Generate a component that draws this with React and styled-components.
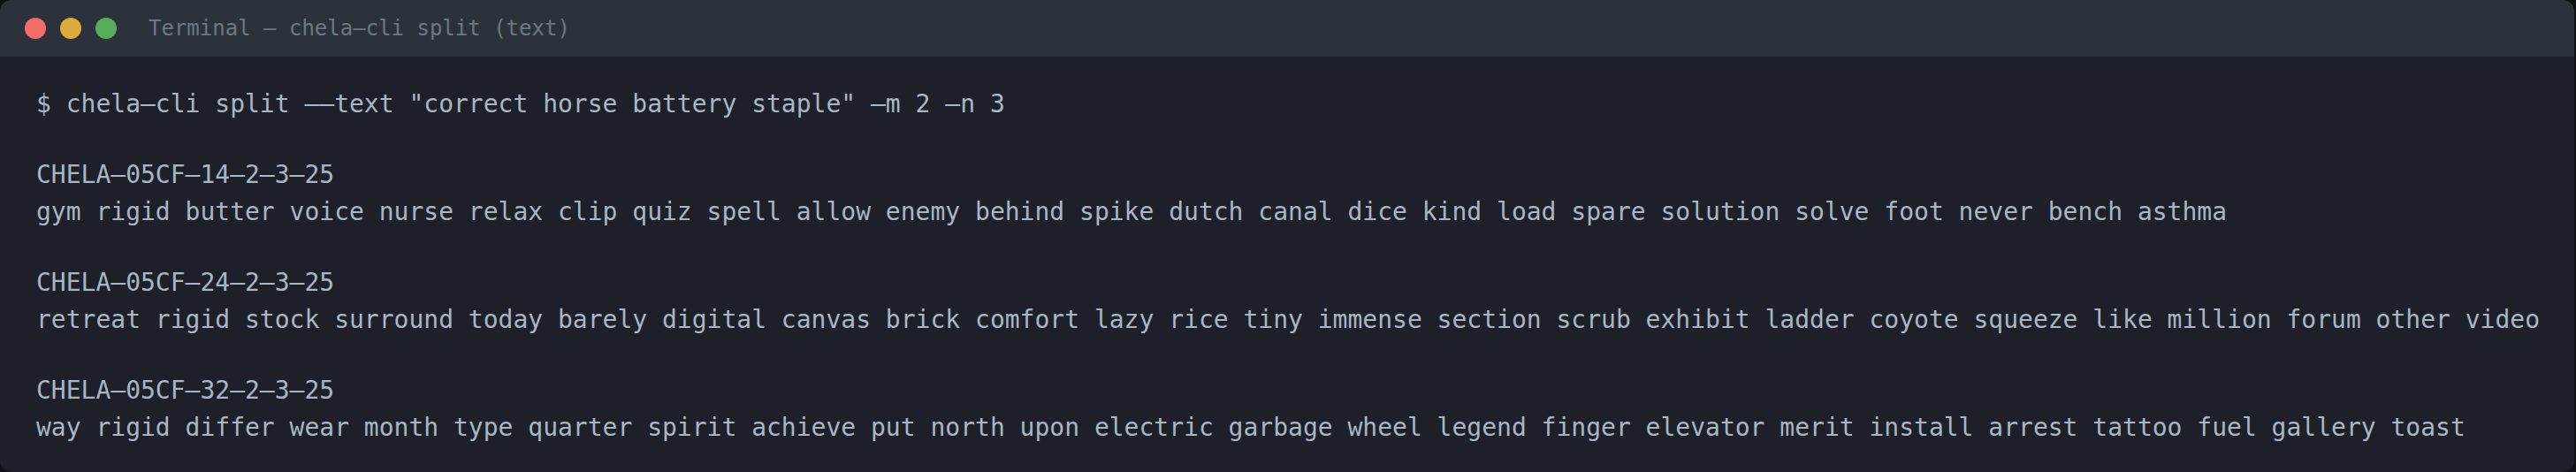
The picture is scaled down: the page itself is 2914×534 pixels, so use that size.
import { createGlobalStyle } from 'styled-components';
import styled from 'styled-components';

const GlobalStyle = createGlobalStyle`
  html, body {
    margin: 0;
    padding: 0;
    background: #0f1318;
  }
`;

const blocks = [
  {
    id: 'CHELA–05CF–14–2–3–25',
    words:
      'gym rigid butter voice nurse relax clip quiz spell allow enemy behind spike dutch canal dice kind load spare solution solve foot never bench asthma',
  },
  {
    id: 'CHELA–05CF–24–2–3–25',
    words:
      'retreat rigid stock surround today barely digital canvas brick comfort lazy rice tiny immense section scrub exhibit ladder coyote squeeze like million forum other video',
  },
  {
    id: 'CHELA–05CF–32–2–3–25',
    words:
      'way rigid differ wear month type quarter spirit achieve put north upon electric garbage wheel legend finger elevator merit install arrest tattoo fuel gallery toast',
  },
];

const App = () => {
  return (
    <>
      <GlobalStyle />
      <Window>
        <TitleBar>
          <Dots>
            <Dot color="#ef6f68" />
            <Dot color="#dcaa3d" />
            <Dot color="#57ac58" />
          </Dots>
          <Title>Terminal — chela–cli split (text)</Title>
        </TitleBar>
        <Body>
          <Line>$ chela–cli split ––text "correct horse battery staple" –m 2 –n 3</Line>
          {blocks.map((b) => (
            <Block key={b.id}>
              <Line>{b.id}</Line>
              <Line>{b.words}</Line>
            </Block>
          ))}
        </Body>
      </Window>
    </>
  );
};

export default App;

const Window = styled.div`
  width: 2912px;
  background: #1d2028;
  border-radius: 13px;
  overflow: hidden;
`;

const TitleBar = styled.div`
  height: 64px;
  background: #2c323b;
  display: flex;
  align-items: center;
  padding-left: 28px;
  box-sizing: border-box;
`;

const Dots = styled.div`
  display: flex;
  gap: 16px;
`;

const Dot = styled.span`
  width: 24px;
  height: 24px;
  border-radius: 50%;
  background: ${(p) => p.color};
`;

const Title = styled.div`
  margin-left: 36px;
  font-family: 'DejaVu Sans Mono', monospace;
  font-size: 24px;
  color: #6c7784;
  white-space: pre;
`;

const Body = styled.div`
  padding: 33px 40px 29px 41px;
  display: flex;
  flex-direction: column;
  gap: 38px;
`;

const Block = styled.div`
  display: flex;
  flex-direction: column;
`;

const Line = styled.div`
  font-family: 'DejaVu Sans Mono', monospace;
  font-size: 28px;
  line-height: 42px;
  color: #a9b6c4;
  white-space: pre;
`;
